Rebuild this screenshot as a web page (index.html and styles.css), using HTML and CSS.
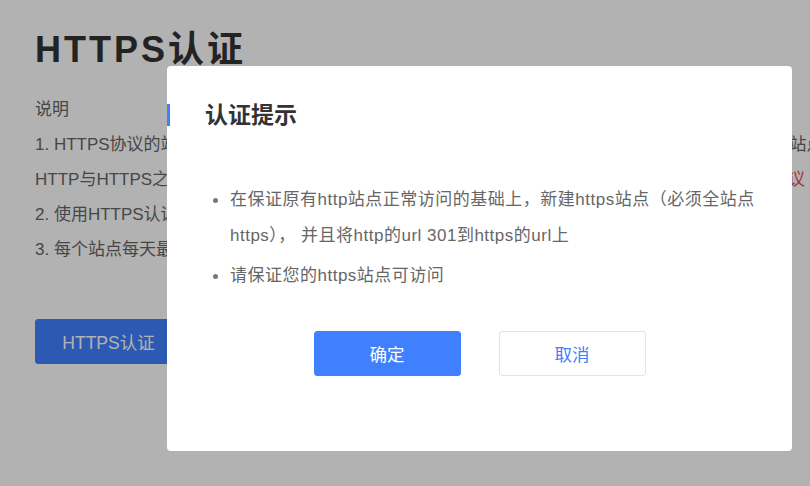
FILE: index.html
```html
<!DOCTYPE html>
<html lang="zh-CN">
<head>
<meta charset="utf-8">
<title>HTTPS认证</title>
<link rel="stylesheet" href="styles.css">
</head>
<body>
<main class="page">
  <h1 class="page-title">HTTPS认证</h1>
  <section class="notes">
    <p class="note">说明</p>
    <p class="note">1. HTTPS协议的站点具有更高的安全性，可以有效防止数据在传输过程中被窃取或篡改，建议所有的站点</p>
    <p class="note">HTTP与HTTPS之间的区别以及迁移注意事项，请在操作之前仔细阅读并了解相关的服务条款 SSL <span class="red">协议</span></p>
    <p class="note">2. 使用HTTPS认证后，搜索引擎将优先展示HTTPS站点</p>
    <p class="note">3. 每个站点每天最多可提交一次认证申请</p>
  </section>
  <button class="btn btn-primary page-btn">HTTPS认证</button>
</main>

<div class="mask"></div>

<div class="dialog">
  <div class="dialog-head">认证提示</div>
  <ul class="dialog-list">
    <li class="dialog-item">在保证原有http站点正常访问的基础上，新建https站点（必须全站点https）， 并且将http的url 301到https的url上</li>
    <li class="dialog-item">请保证您的https站点可访问</li>
  </ul>
  <div class="dialog-foot">
    <button class="btn btn-primary">确定</button>
    <button class="btn btn-default">取消</button>
  </div>
</div>
</body>
</html>
```

FILE: styles.css
```css
html, body {
  margin: 0;
  padding: 0;
}
body {
  width: 810px;
  height: 486px;
  overflow: hidden;
  background: #ffffff;
  font-family: "Liberation Sans", "Noto Sans CJK SC", sans-serif;
  color: #666666;
}
.page {
  padding: 32px 0 0 35px;
  white-space: nowrap;
}
.page-title {
  margin: 0;
  font-size: 36px;
  line-height: 36px;
  font-weight: bold;
  letter-spacing: 3px;
  color: #333333;
}
.notes {
  margin-top: 24px;
}
.note {
  margin: 0;
  font-size: 17px;
  line-height: 35px;
  color: #666666;
}
.red {
  color: #e94b4b;
}
.btn {
  width: 147px;
  height: 45px;
  border-radius: 3px;
  font-family: "Liberation Sans", "Noto Sans CJK SC", sans-serif;
  font-size: 17.5px;
  cursor: pointer;
  padding: 0;
}
.btn-primary {
  background: #4080ff;
  border: 1px solid #4080ff;
  color: #ffffff;
}
.btn-default {
  background: #ffffff;
  border: 1px solid #e3e3e6;
  color: #4080ff;
}
.page-btn {
  margin-top: 52px;
  display: block;
}
.mask {
  position: fixed;
  inset: 0;
  background: rgba(0, 0, 0, 0.3);
}
.dialog {
  position: fixed;
  left: 167px;
  top: 66px;
  width: 625px;
  height: 385px;
  box-sizing: border-box;
  background: #ffffff;
  border-radius: 4px;
  padding-top: 38px;
}
.dialog-head {
  border-left: 3px solid #4080ff;
  padding-left: 35px;
  height: 22px;
  line-height: 22px;
  font-size: 23px;
  font-weight: bold;
  color: #333333;
}
.dialog-list {
  list-style: none;
  margin: 56px 0 0 0;
  padding: 0 28px 0 46px;
}
.dialog-item {
  position: relative;
  padding-left: 17px;
  font-size: 17px;
  line-height: 36px;
  color: #666666;
  letter-spacing: 0.5px;
}
.dialog-item + .dialog-item {
  margin-top: 4px;
}
.dialog-item::before {
  content: "";
  position: absolute;
  left: 0;
  top: 16px;
  width: 5px;
  height: 5px;
  border-radius: 50%;
  background: #7a7a7a;
}
.dialog-foot {
  margin-top: 37px;
  display: flex;
  justify-content: center;
  gap: 38px;
}
```
